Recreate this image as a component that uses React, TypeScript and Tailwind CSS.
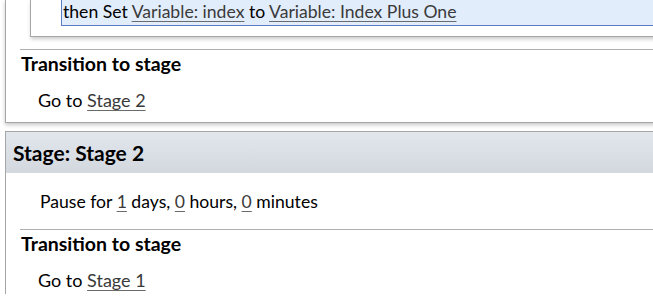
import React from 'react';

function Link({ children }: { children: React.ReactNode }) {
  return <span className="text-[#3a3a3a] underline decoration-[#6a6a6a] underline-offset-[3px]">{children}</span>;
}

function Transition({ target }: { target: string }) {
  return (
    <div>
      <div className="ml-[14px] border-t border-[#b0b0b0]" />
      <p className="pl-[15px] text-[19.5px] leading-[28px] font-bold text-black">Transition to stage</p>
      <p className="mt-[8px] pl-[32px] text-[18px] leading-[28px] text-black">
        Go to <Link>{target}</Link>
      </p>
    </div>
  );
}

export default function App() {
  return (
    <div className="w-[653px] h-[298px] overflow-hidden bg-white font-['Lato',sans-serif]">
      {/* Stage 1 (scrolled, top cut off) */}
      <div className="ml-[5px] mr-[-20px] border-l border-b border-[#a6a6a6] bg-white pb-[8px] shadow-[0_2px_4px_rgba(0,0,0,0.22)]">
        <div className="ml-[24px] border-l border-b border-[#a6a6a6] bg-white pb-[10px] shadow-[1px_2px_4px_rgba(0,0,0,0.22)]">
          <div className="ml-[30px] h-[26px] border-l border-b border-[#5b7cc0] bg-[#e2edfc] pl-[1px] text-[17.6px] leading-[24px] text-black">
            then Set <Link>Variable: index</Link> to <Link>Variable: Index Plus One</Link>
          </div>
        </div>
        <div className="mt-[12px]">
          <Transition target="Stage 2" />
        </div>
      </div>

      {/* Stage 2 */}
      <div className="mt-[8px] ml-[5px] mr-[-20px] border-l border-t border-[#a6a6a6] bg-white">
        <div className="flex h-[41px] items-center bg-gradient-to-b from-[#e2e6ed] to-[#d3d7de] pl-[7px] text-[21px] font-bold text-black">
          Stage:&nbsp;Stage 2
        </div>
        <p className="pl-[34px] pt-[15px] pb-[13px] text-[17.6px] leading-[28px] text-black">
          Pause for <Link>1</Link> days, <Link>0</Link> hours, <Link>0</Link> minutes
        </p>
        <Transition target="Stage 1" />
      </div>
    </div>
  );
}
